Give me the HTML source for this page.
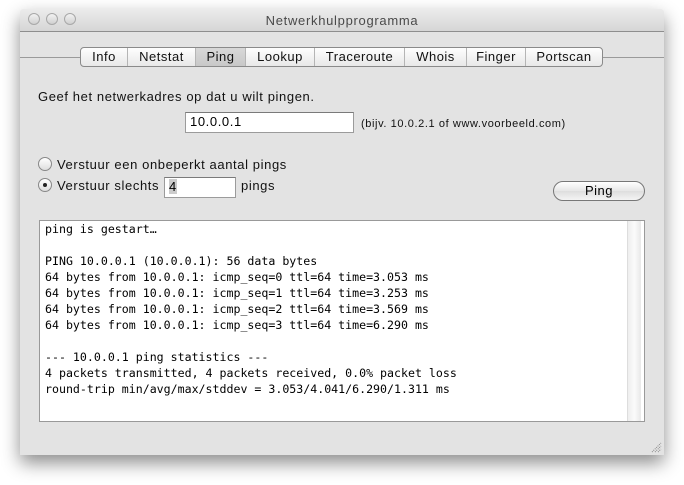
<!DOCTYPE html>
<html><head><style>
body{margin:0;width:684px;height:485px;background:#fff;position:relative;overflow:hidden;font-family:"Liberation Sans",sans-serif;}
.win{position:absolute;left:20px;top:9px;width:644px;height:446px;background:#e3e3e3;box-shadow:0 8px 18px rgba(0,0,0,.45);border-radius:4px 4px 0 0;}
.tb{position:absolute;left:0;top:0;width:644px;height:22px;background:linear-gradient(#ececec,#d6d6d6);border-bottom:1px solid #8e8e8e;border-radius:4px 4px 0 0;}
.tb .t{position:absolute;left:0;right:0;top:4px;text-align:center;font-size:13px;color:#4a4a4a;letter-spacing:.7px;}
.c{position:absolute;top:4px;width:12px;height:12px;border-radius:50%;border:1px solid #a8a8a8;background:linear-gradient(#f2f2f2,#d0d0d0);box-sizing:border-box;}
.hl{position:absolute;top:48px;height:1px;background:#9a9a9a;}
.tabs{position:absolute;left:60px;top:38px;height:20px;width:523px;border:1px solid #8a8a8a;border-radius:4px;background:linear-gradient(#fefefe,#e8e8e8);display:flex;box-sizing:border-box;}
.tabs div{font-size:13px;text-align:center;line-height:18px;border-right:1px solid #b5b5b5;color:#111;box-sizing:border-box;letter-spacing:.5px;}
.tabs div:last-child{border-right:none}
.tabs .s{background:linear-gradient(#d8d8d8,#c8c8c8);}
.lab{position:absolute;font-size:13px;color:#111;letter-spacing:.6px;}
.in{position:absolute;background:#fff;border:1px solid #9b9b9b;border-top-color:#7a7a7a;box-sizing:border-box;font-size:13px;padding-left:4px;line-height:18px;letter-spacing:.6px;}
.rad{position:absolute;width:14px;height:14px;border-radius:50%;border:1px solid #888;background:linear-gradient(#fff,#ddd);box-sizing:border-box;}
.btn{position:absolute;left:533px;top:172px;width:92px;height:20px;border:1px solid #777;border-radius:10px;background:linear-gradient(#fff,#e6e6e6 50%,#dedede 51%,#f4f4f4);box-sizing:border-box;text-align:center;font-size:13px;line-height:18px;letter-spacing:.5px;}
.out{position:absolute;left:19px;top:211px;width:606px;height:202px;background:#fff;border:1px solid #999;box-sizing:border-box;}
.out pre{margin:0;position:absolute;left:5px;top:0px;font-family:"DejaVu Sans Mono","Liberation Mono",monospace;font-size:11.6px;line-height:16px;color:#000;}
.sb{position:absolute;right:3px;top:0;width:13px;bottom:0;background:linear-gradient(90deg,#eee,#fbfbfb,#e8e8e8);border-left:1px solid #ddd;}
</style></head><body>
<div class="win">
 <div class="tb"><div class="c" style="left:8px"></div><div class="c" style="left:26px"></div><div class="c" style="left:44px"></div><div class="t">Netwerkhulpprogramma</div></div>
 <div class="hl" style="left:0;width:62px"></div><div class="hl" style="left:582px;width:62px"></div>
 <div class="tabs">
  <div style="width:47px">Info</div><div style="width:68px">Netstat</div><div class="s" style="width:50px">Ping</div><div style="width:69px">Lookup</div><div style="width:90px">Traceroute</div><div style="width:62px">Whois</div><div style="width:59px">Finger</div><div style="width:76px">Portscan</div>
 </div>
 <div class="lab" style="left:18px;top:80px">Geef het netwerkadres op dat u wilt pingen.</div>
 <div class="in" style="left:165px;top:103px;width:169px;height:21px">10.0.0.1</div>
 <div class="lab" style="left:341px;top:109px;font-size:11px">(bijv. 10.0.2.1 of www.voorbeeld.com)</div>
 <div class="rad" style="left:18px;top:148px"></div>
 <div class="lab" style="left:37px;top:148px">Verstuur een onbeperkt aantal pings</div>
 <div class="rad" style="left:18px;top:169px"><div style="position:absolute;left:4px;top:4px;width:4px;height:4px;border-radius:50%;background:#222"></div></div>
 <div class="lab" style="left:37px;top:169px">Verstuur slechts</div>
 <div class="in" style="left:144px;top:168px;width:72px;height:21px"><span style="background:#ccc">4</span></div>
 <div class="lab" style="left:221px;top:169px">pings</div>
 <div class="btn">Ping</div>
 <div class="out"><pre>ping is gestart…

PING 10.0.0.1 (10.0.0.1): 56 data bytes
64 bytes from 10.0.0.1: icmp_seq=0 ttl=64 time=3.053 ms
64 bytes from 10.0.0.1: icmp_seq=1 ttl=64 time=3.253 ms
64 bytes from 10.0.0.1: icmp_seq=2 ttl=64 time=3.569 ms
64 bytes from 10.0.0.1: icmp_seq=3 ttl=64 time=6.290 ms

--- 10.0.0.1 ping statistics ---
4 packets transmitted, 4 packets received, 0.0% packet loss
round-trip min/avg/max/stddev = 3.053/4.041/6.290/1.311 ms</pre><div class="sb"></div></div>
 <svg style="position:absolute;right:2px;bottom:2px" width="11" height="11"><path d="M1 10L10 1M4 10L10 4M7 10L10 7" stroke="#888" stroke-width="1" stroke-dasharray="1 1"/></svg>
</div>
</body></html>
